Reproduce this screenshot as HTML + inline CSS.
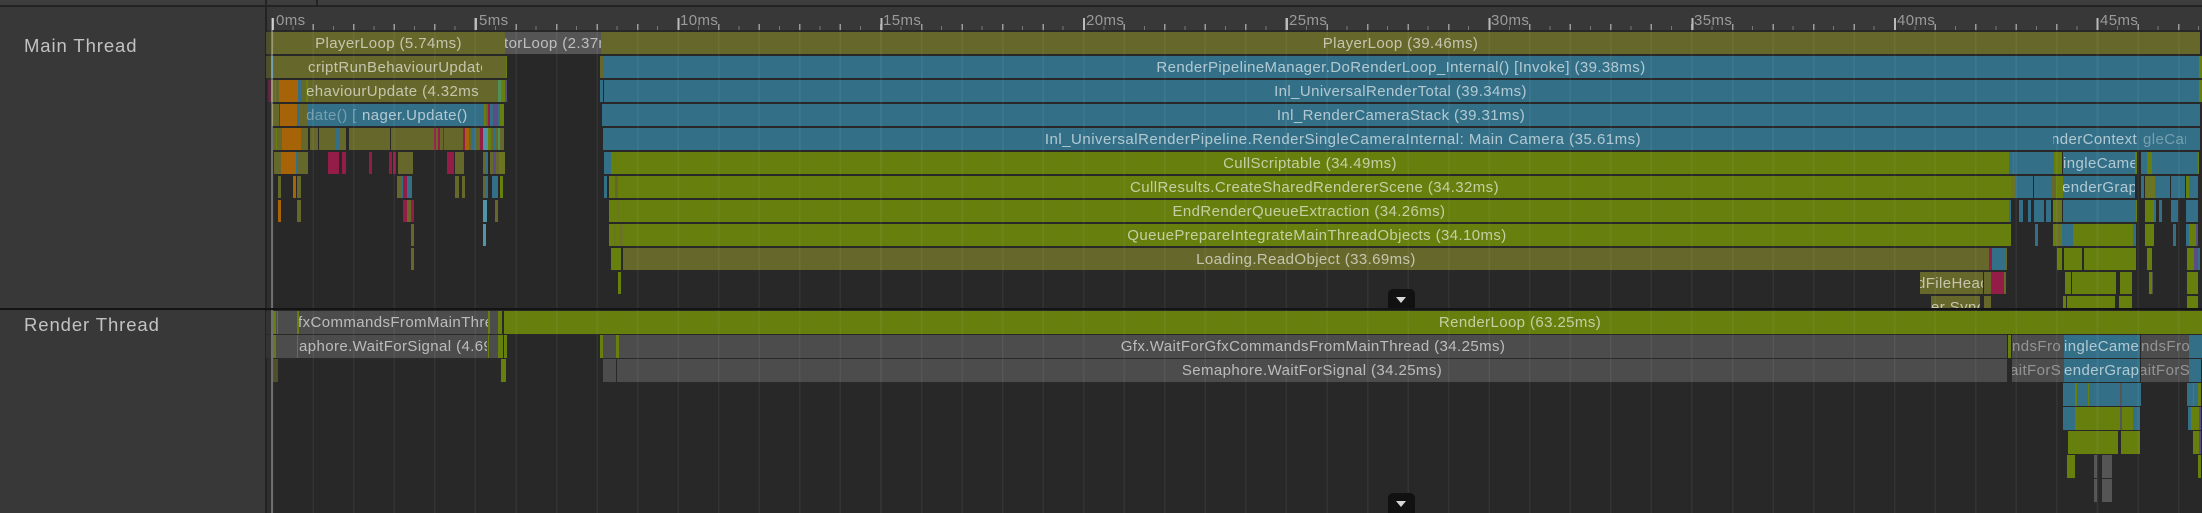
<!DOCTYPE html>
<html><head><meta charset="utf-8"><style>
html,body{margin:0;padding:0;background:#282828;width:2202px;height:513px;overflow:hidden}
body{position:relative;font-family:"Liberation Sans",sans-serif}
.a{position:absolute}
svg{position:absolute;left:0;top:0}
.h22 rect{height:22px}.h23 rect{height:23px}
.o{fill:#66672a}.d{fill:#4e4f2b}.b{fill:#337088}.g{fill:#667f0d}.r{fill:#a66308}.c{fill:#931d47}.y{fill:#4c4c4c}.k{fill:#555}.t{fill:#4f96a8}.p{fill:#5a4d84}.e{fill:#4f8f5a}.m{fill:#6b7423}
.t1{position:absolute;height:22px;line-height:24px;overflow:hidden;white-space:nowrap;font-size:15px;letter-spacing:.4px;color:rgba(255,255,255,.62);text-align:center}
.rr{line-height:22px}
.l{text-align:left}.dim{color:rgba(255,255,255,.33)}
.lb{position:absolute;top:12px;font-size:15px;letter-spacing:.4px;line-height:18px;color:#9a9a9a}
.th{position:absolute;left:24px;font-size:18.5px;letter-spacing:.9px;line-height:22px;color:#c2c2c2}
.pill{position:absolute;left:1388px;width:27px;height:19px;background:#111;border-radius:5px 5px 0 0}
.tri{position:absolute;left:8px;top:8px;width:0;height:0;border-left:5px solid transparent;border-right:5px solid transparent;border-top:6px solid #d6d6d6}
</style></head><body>
<div class="a" style="left:0;top:0;width:2202px;height:5px;background:#3d3d3d"></div>
<div class="a" style="left:0;top:5px;width:2202px;height:2px;background:#232323"></div>
<div class="a" style="left:265px;top:0;width:2px;height:5px;background:#232323"></div>
<div class="a" style="left:316px;top:0;width:2px;height:5px;background:#232323"></div>
<div class="a" style="left:0;top:7px;width:265px;height:506px;background:#383838"></div>
<div class="a" style="left:265px;top:7px;width:2px;height:506px;background:#232323"></div>
<div class="a" style="left:267px;top:7px;width:1935px;height:23px;background:#383838"></div>
<div class="a" style="left:267px;top:30px;width:5px;height:483px;background:#2e2e2e"></div>

<!-- ruler ticks -->
<div class="a" style="left:272px;top:26px;width:1930px;height:4px;background:repeating-linear-gradient(90deg,#777 0,#777 1px,transparent 1px,transparent 20.275px)"></div>
<div class="a" style="left:272px;top:24px;width:1930px;height:6px;background:repeating-linear-gradient(90deg,#9a9a9a 0,#9a9a9a 1.5px,transparent 1.5px,transparent 40.55px)"></div>
<div class="a" style="left:272px;top:18px;width:1930px;height:12px;background:repeating-linear-gradient(90deg,#bbb 0,#bbb 2px,transparent 2px,transparent 202.75px)"></div>
<div class="lb" style="left:276px">0ms</div>
<div class="lb" style="left:479px">5ms</div>
<div class="lb" style="left:680px">10ms</div>
<div class="lb" style="left:883px">15ms</div>
<div class="lb" style="left:1086px">20ms</div>
<div class="lb" style="left:1289px">25ms</div>
<div class="lb" style="left:1491px">30ms</div>
<div class="lb" style="left:1694px">35ms</div>
<div class="lb" style="left:1897px">40ms</div>
<div class="lb" style="left:2100px">45ms</div>

<div class="th" style="top:35px">Main Thread</div>
<div class="th" style="top:314px">Render Thread</div>

<svg width="2202" height="513" xmlns="http://www.w3.org/2000/svg">
<g class="h22" transform="translate(0,32)">
<rect x="266" width="6" class="d"/><rect x="272" width="233" class="o"/><rect x="505" width="96" class="k"/><rect x="601" width="1599" class="o"/>
</g>
<g class="h22" transform="translate(0,56)">
<rect x="266" width="5" class="d"/><rect x="271" width="2" class="b"/><rect x="273" width="233" class="o"/><rect x="506" width="1" class="g"/><rect x="600" width="3" class="o"/><rect x="603" width="1596" class="b"/><rect x="2199" width="3" class="g"/>
</g>
<g class="h22" transform="translate(0,80)">
<rect x="268" width="3" style="fill:#5e2740"/><rect x="271" width="4" class="o"/><rect x="275" width="1" class="g"/><rect x="276" width="3" class="o"/><rect x="279" width="19" class="r"/><rect x="298" width="4" class="b"/><rect x="302" width="4" class="o"/><rect x="306" width="2" class="g"/><rect x="308" width="179" class="o"/><rect x="487" width="1" class="b"/><rect x="488" width="10" class="o"/><rect x="498" width="3" class="e"/><rect x="501" width="4" class="g"/><rect x="505" width="2" class="p"/>
<rect x="600" width="3" class="b"/><rect x="604" width="1595" class="b"/><rect x="2199" width="3" class="g"/>
</g>
<g class="h22" transform="translate(0,104)">
<rect x="272" width="7" class="o"/><rect x="279" width="1" class="c"/><rect x="280" width="17" class="r"/><rect x="297" width="3" class="b"/><rect x="300" width="8" class="o"/><rect x="308" width="176" class="b"/><rect x="484" width="2" class="g"/><rect x="486" width="2" class="o"/><rect x="488" width="2" class="c"/><rect x="490" width="3" class="b"/><rect x="493" width="2" class="o"/><rect x="495" width="1" class="g"/><rect x="496" width="1" class="b"/><rect x="493" width="5" class="p"/><rect x="498" width="2" class="b"/><rect x="500" width="4" class="g"/>
<rect x="602" width="1598" class="b"/>
</g>
<g class="h22" transform="translate(0,128)">
<rect x="273" width="9" class="o"/><rect x="276" width="1" class="g"/><rect x="282" width="19" class="r"/><rect x="301" width="7" class="o"/><rect x="310" width="8" class="o"/><rect x="319" width="17" class="o"/><rect x="336" width="3" class="b"/><rect x="339" width="7" class="o"/><rect x="349" width="41" class="o"/><rect x="391" width="43" class="o"/><rect x="434" width="2" class="c"/><rect x="436" width="2" class="o"/><rect x="438" width="2" class="c"/><rect x="440" width="3" class="o"/><rect x="443" width="1" class="c"/><rect x="444" width="19" class="o"/><rect x="463" width="2" class="c"/><rect x="465" width="4" class="r"/><rect x="469" width="3" class="o"/><rect x="472" width="3" class="b"/><rect x="475" width="5" class="o"/><rect x="480" width="3" class="c"/><rect x="483" width="5" class="t"/><rect x="488" width="3" class="g"/><rect x="491" width="3" class="o"/><rect x="494" width="2" class="b"/><rect x="496" width="2" class="o"/><rect x="498" width="2" class="e"/><rect x="500" width="4" class="o"/>
<rect x="603" width="1597" class="b"/>
</g>
<g class="h22" transform="translate(0,152)">
<rect x="274" width="7" class="o"/><rect x="281" width="15" class="r"/><rect x="296" width="1" class="b"/><rect x="297" width="11" class="o"/><rect x="328" width="11" class="c"/><rect x="342" width="4" class="c"/><rect x="369" width="3" class="c"/><rect x="389" width="3" class="c"/><rect x="393" width="3" class="c"/><rect x="398" width="15" class="o"/><rect x="447" width="7" class="c"/><rect x="455" width="9" class="o"/><rect x="483" width="3" class="o"/><rect x="486" width="2" class="b"/><rect x="490" width="3" class="o"/><rect x="493" width="3" class="p"/><rect x="496" width="3" class="o"/><rect x="499" width="6" class="m"/>
<rect x="604" width="7" class="b"/><rect x="611" width="1398" class="g"/><rect x="2009" width="45" class="b"/><rect x="2013" width="1" class="g"/><rect x="2054" width="8" class="g"/><rect x="2063" width="72" class="b"/><rect x="2135" width="2" class="g"/><rect x="2141" width="6" class="b"/><rect x="2147" width="5" class="g"/><rect x="2152" width="3" class="b"/><rect x="2155" width="1" class="o"/><rect x="2156" width="42" class="b"/><rect x="2198" width="1" class="g"/>
</g>
<g class="h22" transform="translate(0,176)">
<rect x="278" width="3" class="o"/><rect x="293" width="3" class="r"/><rect x="297" width="4" class="o"/><rect x="397" width="4" class="o"/><rect x="401" width="2" class="b"/><rect x="403" width="4" class="c"/><rect x="407" width="1" class="o"/><rect x="408" width="4" class="b"/><rect x="455" width="4" class="o"/><rect x="462" width="3" class="o"/><rect x="483" width="3" class="o"/><rect x="486" width="2" class="b"/><rect x="492" width="6" class="b"/><rect x="500" width="3" class="g"/>
<rect x="604" width="3" class="b"/><rect x="609" width="6" class="g"/><rect x="615" width="3" class="o"/><rect x="618" width="1393" class="g"/><rect x="2011" width="4" class="m"/><rect x="2015" width="18" class="b"/><rect x="2034" width="18" class="b"/><rect x="2052" width="4" class="o"/><rect x="2056" width="7" class="g"/><rect x="2063" width="72" class="b"/><rect x="2141" width="3" class="b"/><rect x="2145" width="10" class="m"/><rect x="2155" width="15" class="b"/><rect x="2171" width="14" class="b"/><rect x="2186" width="3" class="g"/><rect x="2189" width="9" class="b"/>
</g>
<g class="h22" transform="translate(0,200)">
<rect x="278" width="3" class="r"/><rect x="297" width="4" class="o"/><rect x="403" width="4" class="c"/><rect x="407" width="4" class="o"/><rect x="411" width="3" class="c"/><rect x="483" width="4" class="t"/><rect x="495" width="3" class="o"/>
<rect x="609" width="1400" class="g"/><rect x="618" width="1" class="m"/><rect x="2009" width="2" class="b"/><rect x="2019" width="4" class="b"/><rect x="2028" width="3" class="b"/><rect x="2034" width="10" class="b"/><rect x="2046" width="5" class="b"/><rect x="2053" width="3" class="g"/><rect x="2056" width="6" class="m"/><rect x="2063" width="73" class="b"/><rect x="2136" width="1" class="g"/><rect x="2145" width="9" class="g"/><rect x="2154" width="2" class="b"/><rect x="2159" width="3" class="b"/><rect x="2171" width="7" class="b"/><rect x="2186" width="12" class="b"/>
</g>
<g class="h22" transform="translate(0,224)">
<rect x="411" width="3" class="o"/><rect x="483" width="3" class="t"/>
<rect x="609" width="5" class="g"/><rect x="614" width="2" class="m"/><rect x="616" width="3" class="g"/><rect x="619" width="4" class="m"/><rect x="623" width="1388" class="g"/><rect x="2035" width="3" class="b"/><rect x="2053" width="3" class="g"/><rect x="2056" width="6" class="m"/><rect x="2062" width="11" class="b"/><rect x="2073" width="60" class="g"/><rect x="2133" width="3" class="b"/><rect x="2145" width="9" class="g"/><rect x="2173" width="3" class="b"/><rect x="2186" width="3" class="b"/><rect x="2189" width="7" class="g"/><rect x="2196" width="2" class="p"/>
</g>
<g class="h22" transform="translate(0,248)">
<rect x="411" width="3" class="o"/><rect x="611" width="10" class="g"/><rect x="623" width="1366" class="o"/><rect x="1989" width="3" class="c"/><rect x="1992" width="14" class="b"/><rect x="2006" width="1" class="o"/><rect x="2057" width="5" class="g"/><rect x="2064" width="18" class="g"/><rect x="2084" width="52" class="g"/><rect x="2147" width="5" class="g"/><rect x="2187" width="7" class="g"/><rect x="2194" width="4" class="p"/><rect x="2198" width="2" class="b"/>
</g>
<g class="h22" transform="translate(0,272)">
<rect x="618" width="3" class="g"/><rect x="1920" width="63" class="o"/><rect x="1984" width="7" class="o"/><rect x="1991" width="13" class="c"/><rect x="2004" width="2" class="o"/><rect x="2065" width="6" class="g"/><rect x="2072" width="44" class="g"/><rect x="2120" width="12" class="g"/><rect x="2149" width="3" class="g"/><rect x="2152" width="1" class="y"/><rect x="2187" width="11" class="g"/>
</g>
<g transform="translate(0,296)">
<rect x="1931" width="49" height="12" class="o"/><rect x="1984" width="7" height="12" class="o"/><rect x="2063" width="3" height="12" class="g"/><rect x="2067" width="48" height="12" class="g"/><rect x="2119" width="13" height="12" class="g"/><rect x="2187" width="11" height="12" class="g"/>
</g>

<g class="h23" transform="translate(0,311)">
<rect x="266" width="6" style="fill:#333"/><rect x="273" width="3" class="g"/><rect x="276" width="1" class="y"/><rect x="277" width="1" class="m"/><rect x="278" width="19" class="y"/><rect x="297" width="2" class="g"/><rect x="299" width="189" class="y"/><rect x="488" width="2" class="g"/><rect x="490" width="8" class="y"/><rect x="498" width="4" class="g"/><rect x="504" width="1698" class="g"/>
</g>
<g class="h23" transform="translate(0,335)">
<rect x="266" width="6" style="fill:#333"/><rect x="273" width="3" class="m"/><rect x="276" width="212" class="y"/><rect x="297" width="1" class="m"/><rect x="488" width="1" class="g"/><rect x="489" width="9" class="y"/><rect x="498" width="5" class="g"/><rect x="504" width="3" class="g"/><rect x="600" width="3" class="g"/><rect x="603" width="13" class="y"/><rect x="616" width="3" class="g"/><rect x="619" width="1388" class="y"/><rect x="2008" width="3" class="g"/><rect x="2012" width="52" class="y"/><rect x="2064" width="76" class="b"/><rect x="2141" width="48" class="y"/><rect x="2189" width="13" class="b"/>
</g>
<g class="h23" transform="translate(0,359)">
<rect x="273" width="5" class="d"/><rect x="501" width="5" class="g"/><rect x="603" width="13" class="y"/><rect x="617" width="1390" class="y"/><rect x="2012" width="52" class="y"/><rect x="2064" width="76" class="b"/><rect x="2141" width="48" class="y"/><rect x="2189" width="12" class="b"/>
</g>
<g class="h23" transform="translate(0,383)">
<rect x="2063" width="57" class="b"/><rect x="2075" width="2" class="g"/><rect x="2088" width="1" class="g"/><rect x="2120" width="2" class="k"/><rect x="2122" width="19" class="b"/><rect x="2187" width="12" class="b"/><rect x="2193" width="1" class="g"/><rect x="2198" width="3" class="g"/>
</g>
<g class="h23" transform="translate(0,407)">
<rect x="2063" width="12" class="b"/><rect x="2075" width="45" class="g"/><rect x="2120" width="2" class="k"/><rect x="2122" width="11" class="g"/><rect x="2133" width="7" class="b"/><rect x="2188" width="3" class="b"/><rect x="2191" width="8" class="g"/><rect x="2199" width="2" class="p"/>
</g>
<g class="h23" transform="translate(0,431)">
<rect x="2068" width="50" class="g"/><rect x="2121" width="19" class="g"/><rect x="2193" width="6" class="g"/><rect x="2199" width="2" class="p"/>
</g>
<g class="h23" transform="translate(0,455)">
<rect x="2067" width="8" class="g"/><rect x="2094" width="3" class="k"/><rect x="2102" width="10" class="k"/><rect x="2198" width="3" class="g"/>
</g>
<g class="h23" transform="translate(0,479)">
<rect x="2094" width="3" class="k"/><rect x="2102" width="10" class="k"/>
</g>
</svg>

<!-- bar labels -->
<div class="t1" style="left:272px;top:32px;width:233px">PlayerLoop (5.74ms)</div>
<div class="t1 l" style="left:505px;top:32px;width:96px;text-indent:-1px">torLoop (2.37m</div>
<div class="t1" style="left:601px;top:32px;width:1599px">PlayerLoop (39.46ms)</div>
<div class="t1 l" style="left:307px;top:56px;width:175px;text-indent:1px">criptRunBehaviourUpdate</div>
<div class="t1" style="left:603px;top:56px;width:1596px">RenderPipelineManager.DoRenderLoop_Internal() [Invoke] (39.38ms)</div>
<div class="t1 l" style="left:307px;top:80px;width:175px;text-indent:-1px">ehaviourUpdate (4.32ms</div>
<div class="t1" style="left:604px;top:80px;width:1593px">Inl_UniversalRenderTotal (39.34ms)</div>
<div class="t1 l dim" style="left:307px;top:104px;width:55px;text-indent:-1px">date() [</div>
<div class="t1 l" style="left:363px;top:104px;width:104px;text-indent:-1px">nager.Update()</div>
<div class="t1" style="left:602px;top:104px;width:1598px">Inl_RenderCameraStack (39.31ms)</div>
<div class="t1" style="left:603px;top:128px;width:1480px;letter-spacing:.5px">Inl_UniversalRenderPipeline.RenderSingleCameraInternal: Main Camera (35.61ms)</div>
<div class="t1 l" style="left:2053px;top:128px;width:84px;text-indent:-2px">nderContext.</div>
<div class="t1 l dim" style="left:2143px;top:128px;width:43px">gleCar</div>
<div class="t1" style="left:611px;top:152px;width:1398px">CullScriptable (34.49ms)</div>
<div class="t1 l" style="left:2063px;top:152px;width:72px">ingleCame</div>
<div class="t1" style="left:618px;top:176px;width:1393px">CullResults.CreateSharedRendererScene (34.32ms)</div>
<div class="t1 l" style="left:2063px;top:176px;width:72px;text-indent:-1px">enderGrapl</div>
<div class="t1" style="left:609px;top:200px;width:1400px">EndRenderQueueExtraction (34.26ms)</div>
<div class="t1" style="left:623px;top:224px;width:1388px">QueuePrepareIntegrateMainThreadObjects (34.10ms)</div>
<div class="t1" style="left:623px;top:248px;width:1366px">Loading.ReadObject (33.69ms)</div>
<div class="t1 l" style="left:1920px;top:272px;width:63px;text-indent:-3px">dFileHeac</div>
<div class="t1 l" style="left:1931px;top:296px;width:49px;height:12px">er Sync</div>

<div class="t1 rr l" style="left:299px;top:312px;width:189px;text-indent:-1px">fxCommandsFromMainThre</div>
<div class="t1 rr" style="left:504px;top:312px;width:2032px">RenderLoop (63.25ms)</div>
<div class="t1 rr l" style="left:299px;top:336px;width:188px">aphore.WaitForSignal (4.69</div>
<div class="t1 rr" style="left:619px;top:336px;width:1388px">Gfx.WaitForGfxCommandsFromMainThread (34.25ms)</div>
<div class="t1 rr l" style="left:2012px;top:336px;width:52px;color:rgba(255,255,255,.4)">ndsFro</div>
<div class="t1 rr l" style="left:2064px;top:336px;width:76px">ingleCame</div>
<div class="t1 rr l" style="left:2141px;top:336px;width:48px;color:rgba(255,255,255,.4)">ndsFro</div>
<div class="t1 rr" style="left:617px;top:360px;width:1390px">Semaphore.WaitForSignal (34.25ms)</div>
<div class="t1 rr l" style="left:2012px;top:360px;width:52px;text-indent:-2px;color:rgba(255,255,255,.4)">aitForS</div>
<div class="t1 rr l" style="left:2064px;top:360px;width:76px">enderGraph</div>
<div class="t1 rr l" style="left:2141px;top:360px;width:48px;text-indent:-2px;color:rgba(255,255,255,.4)">aitForS</div>

<!-- grid overlay -->
<div class="a" style="left:272px;top:30px;width:1930px;height:483px;background:repeating-linear-gradient(90deg,rgba(255,255,255,.05) 0,rgba(255,255,255,.05) 1.5px,transparent 1.5px,transparent 40.55px)"></div>
<div class="a" style="left:271px;top:18px;width:2px;height:495px;background:rgba(255,255,255,.3)"></div>

<!-- thread separator -->
<div class="a" style="left:0;top:308px;width:2202px;height:2px;background:#141414"></div>
<div class="pill" style="top:289px"><div class="tri"></div></div>
<div class="pill" style="top:493px;height:20px"><div class="tri"></div></div>
</body></html>
